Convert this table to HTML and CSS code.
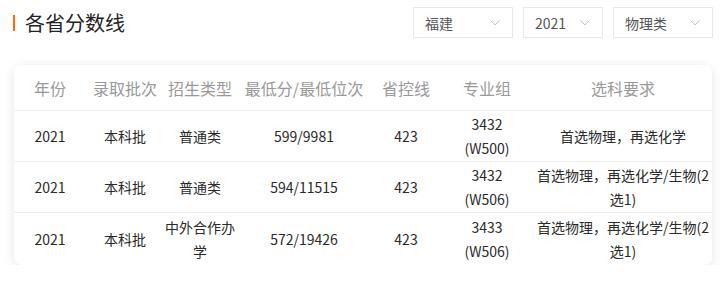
FILE: index.html
```html
<!DOCTYPE html>
<html lang="zh-CN">
<head>
<meta charset="utf-8">
<title>各省分数线</title>
<link rel="stylesheet" href="styles.css">
</head>
<body>
<div class="page">
  <div class="topbar">
    <h2 class="title">各省分数线</h2>
    <div class="filters">
      <div class="select w100"><span>福建</span><svg class="chev" viewBox="0 0 10 6" width="10" height="6"><path d="M0.5 0.5 L5 5 L9.5 0.5" fill="none" stroke="#c8c8c8" stroke-width="1"/></svg></div>
      <div class="select w80"><span>2021</span><svg class="chev" viewBox="0 0 10 6" width="10" height="6"><path d="M0.5 0.5 L5 5 L9.5 0.5" fill="none" stroke="#c8c8c8" stroke-width="1"/></svg></div>
      <div class="select w100"><span>物理类</span><svg class="chev" viewBox="0 0 10 6" width="10" height="6"><path d="M0.5 0.5 L5 5 L9.5 0.5" fill="none" stroke="#c8c8c8" stroke-width="1"/></svg></div>
    </div>
  </div>
  <div class="card">
    <div class="row head">
      <div class="cell">年份</div>
      <div class="cell">录取批次</div>
      <div class="cell">招生类型</div>
      <div class="cell">最低分/最低位次</div>
      <div class="cell">省控线</div>
      <div class="cell">专业组</div>
      <div class="cell">选科要求</div>
    </div>
    <div class="row">
      <div class="cell">2021</div>
      <div class="cell">本科批</div>
      <div class="cell">普通类</div>
      <div class="cell">599/9981</div>
      <div class="cell">423</div>
      <div class="cell">3432<br>(W500)</div>
      <div class="cell">首选物理，再选化学</div>
    </div>
    <div class="row">
      <div class="cell">2021</div>
      <div class="cell">本科批</div>
      <div class="cell">普通类</div>
      <div class="cell">594/11515</div>
      <div class="cell">423</div>
      <div class="cell">3432<br>(W506)</div>
      <div class="cell">首选物理，再选化学/生物(2选1)</div>
    </div>
    <div class="row last">
      <div class="cell">2021</div>
      <div class="cell">本科批</div>
      <div class="cell">中外合作办学</div>
      <div class="cell">572/19426</div>
      <div class="cell">423</div>
      <div class="cell">3433<br>(W506)</div>
      <div class="cell">首选物理，再选化学/生物(2选1)</div>
    </div>
  </div>
</div>
</body>
</html>
```
FILE: styles.css
```css
* { box-sizing: border-box; }
html, body { margin: 0; padding: 0; background: #fff; }
body {
  font-family: "Noto Sans CJK SC", "Microsoft YaHei", sans-serif;
  color: #333;
}
.page { width: 725px; }
.topbar {
  display: flex;
  justify-content: space-between;
  align-items: center;
  padding: 7px 12px 0 13px;
  height: 38px;
}
.title {
  margin: 0;
  font-size: 20px;
  font-weight: normal;
  color: #222;
  line-height: 20px;
  border-left: 2px solid #ff6a00;
  padding-left: 10px;
  height: 16px;
  display: flex;
  align-items: center;
}
.filters { display: flex; gap: 10px; }
.select {
  height: 31px;
  border: 1px solid #e8e8e8;
  display: flex;
  align-items: center;
  justify-content: space-between;
  padding: 0 12px 0 11px;
  font-size: 14px;
  color: #555;
}
.w100 { width: 100px; }
.w80 { width: 80px; }
.chev { display: block; }
.card {
  margin: 27px 13px 0 14px;
  background: #fff;
  border-radius: 8px;
  box-shadow: 0 2px 12px rgba(0, 0, 0, 0.1);
  overflow: hidden;
}
.row {
  display: grid;
  grid-template-columns: 72px 78px 72px 136px 68px 94px 178px;
  align-items: center;
  min-height: 51px;
  border-bottom: 1px solid #eee;
  font-size: 14px;
  line-height: 24px;
  color: #2a2a2a;
}
.row.head {
  min-height: 46px;
  font-size: 16px;
  color: #999;
}
.row.last { border-bottom: none; min-height: 52px; }
.cell { text-align: center; }
```
